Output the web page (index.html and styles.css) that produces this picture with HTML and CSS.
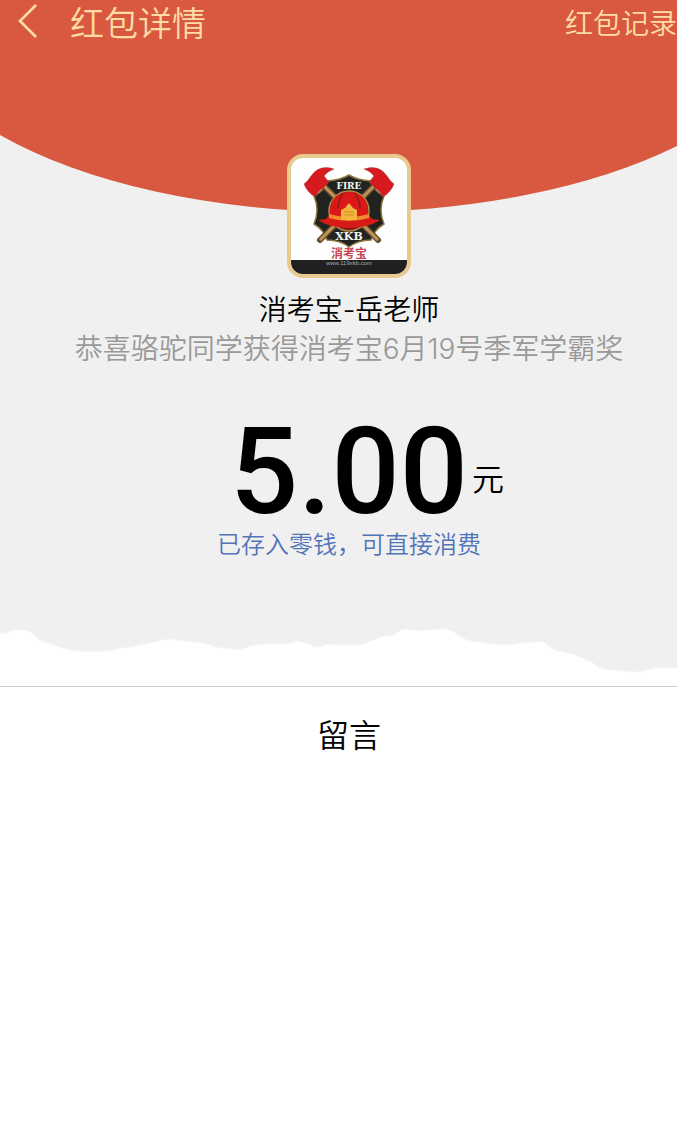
FILE: index.html
```html
<!DOCTYPE html>
<html lang="zh-CN">
<head>
    <meta charset="UTF-8">
    <meta name="viewport" content="width=device-width, initial-scale=1.0">
    <title>红包详情</title>
    <link rel="stylesheet" href="styles.css">
</head>
<body>

    <!-- Top bar -->
    <header class="header">
        <a class="back" href="#" aria-label="返回">
            <svg width="20" height="36" viewBox="0 0 20 36" fill="none" stroke="currentColor" stroke-width="2.6">
                <path d="M18 1 L2 17 L18 33"/>
            </svg>
        </a>
        <h1 class="title">红包详情</h1>
        <a class="records" href="#">红包记录</a>
    </header>

    <main>
        <section class="packet">
            <svg class="arc" viewBox="0 0 677 168" preserveAspectRatio="none" aria-hidden="true">
                <path d="M0 0 H677 V102 A450 206 0 0 1 349 168 A450 206 0 0 1 0 91 Z" fill="#d95940"/>
            </svg>

            <div class="details">
                <!-- Sender logo -->
                <svg class="avatar" viewBox="0 0 116 116" role="img" aria-label="消考宝">
                    <rect width="116" height="116" fill="#fefefe"/>
                    <!-- shield -->
                    <path d="M58 17 Q66 22 80 23 Q82 32 93 38 Q87 52 93 66 Q83 72 80 82 Q67 82 58 89 Q49 82 36 82 Q33 72 23 66 Q29 52 23 38 Q34 32 36 23 Q50 22 58 17 Z" fill="#20231f" stroke="#8c7840" stroke-width="1.5"/>
                    <!-- axe handles -->
                    <path d="M29 24 L87 82 M87 24 L29 82" stroke="#6b4a2a" stroke-width="6" stroke-linecap="round"/>
                    <path d="M29 24 L87 82 M87 24 L29 82" stroke="#b9985c" stroke-width="3"/>
                    <!-- axe heads -->
                    <path d="M43 11 Q28 6 20 18 Q17 23 13 26 Q16 34 24 39 Q27 33 32 30 L38 24 L33 18 Q37 13 43 11 Z" fill="#d71920" stroke="#a54b43" stroke-width="0.5"/>
                    <path d="M73 11 Q88 6 96 18 Q99 23 103 26 Q100 34 92 39 Q89 33 84 30 L78 24 L83 18 Q79 13 73 11 Z" fill="#d71920" stroke="#a54b43" stroke-width="0.5"/>
                    <!-- helmet -->
                    <circle cx="58" cy="53" r="20" fill="#7d211c" stroke="#b38a48" stroke-width="1.5"/>
                    <path d="M39 59 Q37 35 58 34 Q79 35 77 59 Z" fill="#dc1718"/>
                    <path d="M52 35 Q47 43 47 50 M64 35 Q69 43 69 50" fill="none" stroke="#981d19" stroke-width="2"/>
                    <path d="M38 57 Q58 64 78 57 L81 61 L89 62 Q77 70 58 70 Q39 70 27 62 L35 61 Z" fill="#d91b18"/>
                    <path d="M38 56 Q58 62 78 56 L78 60 Q58 66 38 60 Z" fill="#f18b2c"/>
                    <path d="M50 62 V52 L54 50 L58 45 L62 50 L66 52 V62 Z" fill="#f4b53f"/>
                    <path d="M53 54 H63 M53 57 H63" stroke="#da8927" stroke-width="1"/>
                    <text class="logo-text" x="58" y="31" font-size="9">FIRE</text>
                    <text class="logo-text" x="58" y="82" font-size="11">XKB</text>
                    <text class="logo-name" x="58" y="100" font-size="12">消考宝</text>
                    <rect y="102" width="116" height="14" fill="#202020"/>
                    <text class="logo-url" x="58" y="107" font-size="6">www.119xkb.com</text>
                </svg>

                <h2 class="sender">消考宝-岳老师</h2>
                <p class="message">恭喜骆驼同学获得消考宝6月19号季军学霸奖</p>
                <p class="amount">
                    <span class="number">5.00</span>
                    <span class="unit">元</span>
                </p>
                <p class="deposit">已存入零钱，可直接消费</p>
            </div>

            <!-- Torn paper edge -->
            <svg class="torn" viewBox="0 0 677 60" preserveAspectRatio="none" aria-hidden="true">
                <path d="M-4 8 L7 7 Q10 4 17 4 Q29 4 33 8 L38 13 Q45 17 52 18 L55 20 Q64 22 70 24 Q80 26 88 25 Q106 26 117 23 L135 20 L155 16 Q163 13 171 13 Q183 15 195 16 Q209 17 215 21 L230 23 Q240 25 250 20 Q264 17 278 18 Q289 18 298 15 Q309 17 315 21 Q320 21 328 18 Q341 20 357 19 Q363 19 380 11 Q386 10 394 9 Q402 2 407 3 Q419 6 431 4 Q446 1 454 6 Q463 15 479 16 Q502 21 523 17 Q540 15 544 16 Q553 25 563 26 L575 29 L589 35 Q592 35 596 40 Q602 44 616 44 Q637 48 648 44 Q654 41 664 42 H681 V64 H-4 Z" fill="#fff" stroke="#f7f7f7" stroke-width="1"/>
            </svg>
        </section>

        <section class="comments">
            <h2 class="comments-title">留言</h2>
        </section>
    </main>

</body>
</html>
```

FILE: styles.css
```css
* {
    box-sizing: border-box;
}

body {
    margin: 0;
    background-color: #fff;
    color: #000;
    font-family: Inter, "Noto Sans CJK SC", sans-serif;
    font-weight: 350;
}

h1, h2, p {
    margin: 0;
    font-weight: inherit;
}

svg {
    display: block;
}

.header {
    display: flex;
    align-items: center;
    height: 44px;
    padding-left: 18px;
    background-color: #d95940;
    color: #ffdca5;
}

.header a {
    color: inherit;
    text-decoration: none;
}

.title,
.records {
    padding-top: 4px;
    line-height: 44px;
}

.title {
    margin-left: 32px;
    font-size: 34px;
}

.records {
    margin-left: auto;
    font-size: 28px;
}

.packet {
    display: grid;
    background-color: #f0f0f0;
    border-bottom: 1px solid #ccc;
}

/* the red curve and the details share one grid cell */
.arc,
.details {
    grid-area: 1 / 1;
}

.arc {
    width: 100%;
    height: 168px;
}

.details {
    display: flex;
    flex-direction: column;
    align-items: center;
    padding: 110px 0 64px 21px;
    text-align: center;
}

.avatar {
    width: 124px;
    height: 124px;
    border: 4px solid #e8ca91;
    border-radius: 16px;
    background-color: #e8ca91;
}

.logo-text {
    fill: #f5f5f0;
    font-family: "DejaVu Serif", serif;
    font-weight: bold;
    text-anchor: middle;
}

.logo-name {
    fill: #c74652;
    font-weight: bold;
    text-anchor: middle;
}

.logo-url {
    fill: #aaa;
    font-family: "Liberation Sans", sans-serif;
    text-anchor: middle;
}

.sender {
    margin-top: 12px;
    font-size: 28px;
    line-height: 40px;
}

.message {
    color: #999;
    font-size: 28px;
    line-height: 38px;
}

.amount {
    display: grid;
    grid-template-columns: 1fr auto 1fr;
    align-items: end;
    width: 100%;
    margin-top: 48px;
}

.number {
    grid-column: 2;
    font-family: Roboto, sans-serif;
    font-size: 120px;
    font-weight: 500;
    line-height: 112px;
}

.unit {
    padding: 0 0 28px 4px;
    font-size: 32px;
    line-height: 40px;
    text-align: left;
}

.deposit {
    color: #5274b8;
    font-size: 24px;
    line-height: 34px;
}

.torn {
    width: 100%;
    height: 60px;
}

.comments {
    padding: 25px 0 24px 21px;
    text-align: center;
}

.comments-title {
    font-size: 32px;
    line-height: 48px;
}
```
